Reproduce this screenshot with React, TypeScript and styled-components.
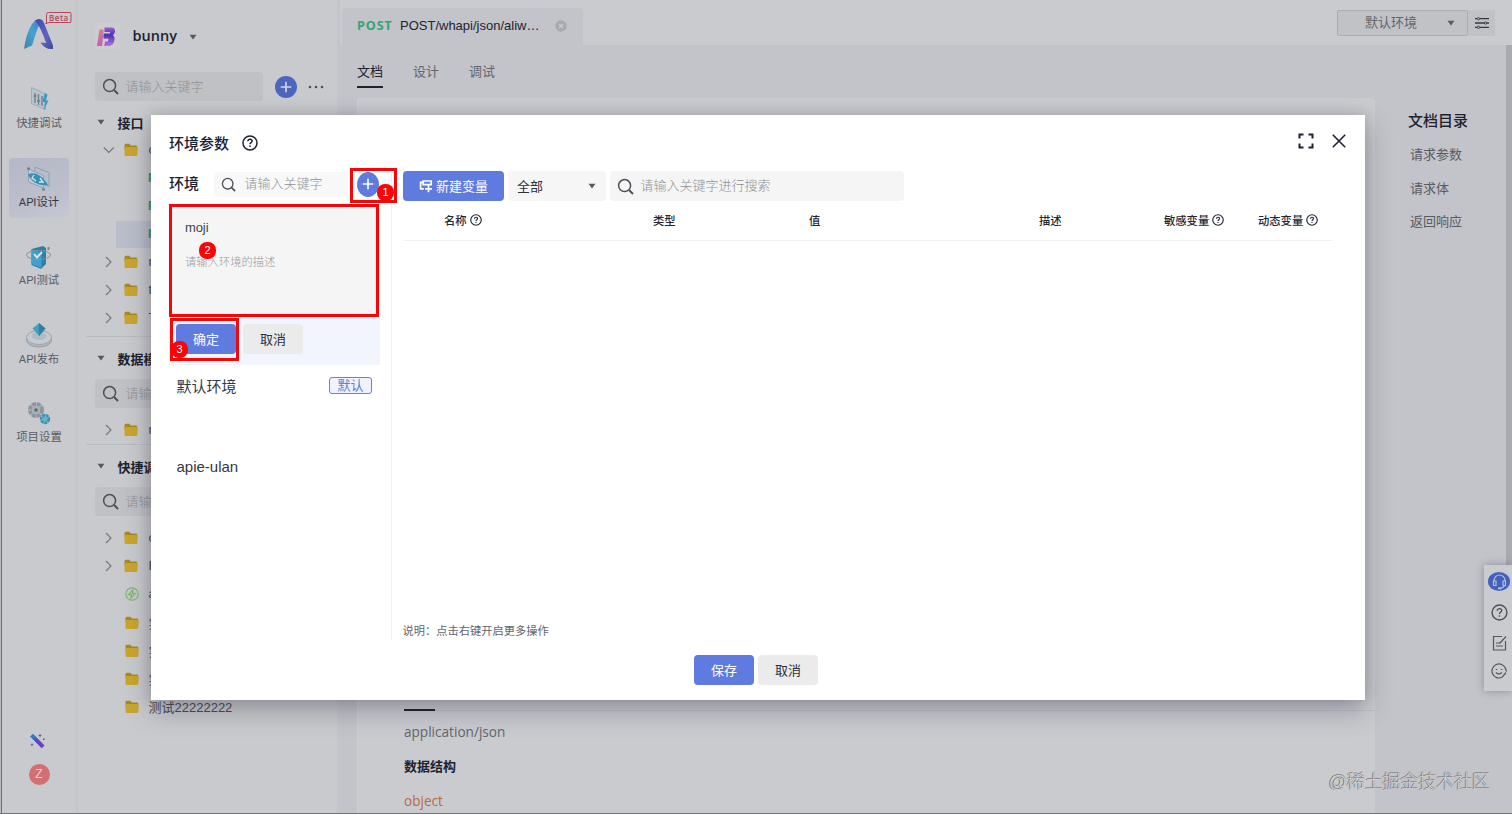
import React from "react";
import styled, { createGlobalStyle, css } from "styled-components";

const GlobalStyle = createGlobalStyle`
  * { box-sizing: border-box; }
  html, body { margin: 0; padding: 0; overflow: hidden; }
  body {
    font-family: "Liberation Sans", "Noto Sans CJK SC", sans-serif;
    font-size: 13px;
    color: #1d2233;
  }
`;

const ui = `"Open Sans", "Noto Sans CJK SC", sans-serif`;

const Screen = styled.div`
  position: relative;
  width: 1512px;
  height: 814px;
  display: flex;
  overflow: hidden;
  background: #c9cacd;
  border-bottom: 1px solid #73747a;
`;

const WindowEdge = styled.div`
  flex: none;
  width: 2px;
  background: #b9b9be;
  border-right: 1px solid #707178;
`;

/* ---------- left navigation ---------- */

const Nav = styled.nav`
  flex: none;
  width: 76px;
  display: flex;
  flex-direction: column;
  align-items: center;
  padding-top: 11px;
  border-right: 2px solid #c4c5ca;
`;

const Logo = styled.div`
  height: 68px;
  width: 76px;
  padding-left: 1px;
`;

const NavList = styled.div`
  display: flex;
  flex-direction: column;
  gap: 18.5px;
`;

const NavItem = styled.div<{ $active?: boolean }>`
  width: 60px;
  height: 60px;
  padding-top: 5px;
  display: flex;
  flex-direction: column;
  align-items: center;
  border-radius: 4px;
  ${(p) => p.$active && css`background: linear-gradient(160deg, #b4b7c4, #bec0ce 70%, #c6c8d2);`}
`;

const NavLabel = styled.span<{ $active?: boolean }>`
  font-family: Roboto, "Noto Sans CJK SC", sans-serif;
  font-size: 11.4px;
  line-height: 16px;
  white-space: nowrap;
  color: ${(p) => (p.$active ? "#343845" : "#5a5d66")};
`;

const NavFoot = styled.div`
  margin-top: auto;
  margin-bottom: 28px;
  display: flex;
  flex-direction: column;
  align-items: center;
  gap: 15px;
`;

const WandSlot = styled.div`
  display: flex;
  margin-right: 4px;
`;

const Avatar = styled.div`
  width: 21px;
  height: 21px;
  border-radius: 50%;
  background: #d36f73;
  color: #e5d5d7;
  font-size: 12px;
  line-height: 21px;
  text-align: center;
`;

/* ---------- project sidebar ---------- */

const Sidebar = styled.aside`
  flex: none;
  width: 262px;
  padding-left: 17px;
  border-right: 3px solid #c4c5ca;
`;

const Project = styled.div`
  height: 72px;
  display: flex;
  align-items: center;
  gap: 12.5px;
  font: 600 14.5px ${ui};
  color: #20232f;
`;

const ProjectName = styled.span`
  display: flex;
  align-items: center;
  gap: 12px;
  padding-bottom: 2px;

  svg { position: relative; top: 2px; }
`;

const SearchRow = styled.div`
  display: flex;
  align-items: center;
  height: 29px;
`;

const SearchBox = styled.div<{ $w: number; $h: number; $bg: string; $gap?: number }>`
  width: ${(p) => p.$w}px;
  height: ${(p) => p.$h}px;
  flex: none;
  display: flex;
  align-items: center;
  gap: ${(p) => p.$gap ?? 6.5}px;
  padding-left: 7px;
  background: ${(p) => p.$bg};
  border-radius: 4px;
  color: #8e9096;
  font-weight: 300;
  font-size: 13px;
  white-space: nowrap;
`;

const Placeholder = styled.span`
  padding-bottom: 3px;
`;

const AddCircle = styled.div<{ $w: number; $h: number; $bg: string }>`
  width: ${(p) => p.$w}px;
  height: ${(p) => p.$h}px;
  flex: none;
  border-radius: 50%;
  background: ${(p) => p.$bg};
  display: flex;
  align-items: center;
  justify-content: center;
`;

const SideAdd = styled.div`
  display: flex;
  align-items: center;
  gap: 11px;
  margin-left: 12px;
`;

const Group = styled.section<{ $line?: boolean; $end?: number }>`
  border-top: ${(p) => (p.$line ? "1px solid #bbbcc1" : "0")};
  margin-left: -9px;
  padding: 0 0 ${(p) => p.$end ?? 0}px 9px;
`;

const GroupTitle = styled.div<{ $h: number; $top?: number }>`
  height: ${(p) => p.$h}px;
  display: flex;
  align-items: center;
  gap: 12.5px;
  padding: ${(p) => p.$top ?? 0}px 0 0 2px;
  font-size: 13px;
  font-weight: 700;
  color: #20232f;
  white-space: nowrap;
`;

const GroupGap = styled.div`
  height: 8px;
`;

const TreeRow = styled.div<{ $leaf?: boolean }>`
  height: 28.05px;
  display: flex;
  align-items: center;
  padding-left: ${(p) => (p.$leaf ? 9 : 8)}px;
  color: #494c56;
  font-size: 13px;
`;

const Caret = styled.span`
  width: 21px;
  display: flex;
`;

const Kind = styled.span<{ $leaf?: boolean }>`
  width: ${(p) => (p.$leaf ? 23.5 : 24.5)}px;
  display: flex;
`;

const RowName = styled.span`
  padding-bottom: 1px;
`;

const Method = styled.span`
  color: #2c9a63;
  font-size: 12px;
  font-weight: 700;
`;

const RowFill = styled.span<{ $active?: boolean }>`
  display: flex;
  align-items: center;
  flex: 1;
  height: 27px;
  margin-left: 13px;
  padding-left: 32px;
  ${(p) => p.$active && css`background: #babdca;`}
`;

/* ---------- document area ---------- */

const Main = styled.main`
  flex: 1;
  min-width: 0;
  display: flex;
  flex-direction: column;
  background: #c3c4c9;
`;

const TopBar = styled.div`
  height: 45px;
  flex: none;
  display: flex;
  justify-content: space-between;
  align-items: flex-end;
  background: #cacbcf;
  padding: 0 17px 0 2px;
`;

const FileTab = styled.div`
  width: 241px;
  height: 37px;
  display: flex;
  align-items: center;
  padding: 0 0 2px 15px;
  background: #c3c4c9;
  border-radius: 4px 4px 0 0;
  font-size: 13px;
  color: #20232f;
`;

const PostTag = styled.b`
  font-family: ${ui};
  font-size: 12.6px;
  color: #35a372;
  letter-spacing: 0.9px;
  width: 43px;
`;

const TabTitle = styled.span`
  width: 155px;
`;

const EnvPicker = styled.div`
  display: flex;
  height: 26px;
  margin-bottom: 9px;
`;

const EnvSelect = styled.div`
  width: 131px;
  display: flex;
  align-items: center;
  justify-content: space-between;
  padding: 0 12px 0 27px;
  border: 1px solid #abacb1;
  background: #c1c2c6;
  color: #65676e;
  border-radius: 2px;
`;

const EnvButton = styled.div`
  width: 27px;
  display: flex;
  align-items: center;
  justify-content: center;
  background: #c1c2c6;
`;

const Body = styled.div`
  flex: 1;
  min-height: 0;
  display: flex;
`;

const DocColumn = styled.div`
  width: 1018px;
  margin-left: 17px;
  display: flex;
  flex-direction: column;
`;

const DocTabs = styled.div`
  height: 53px;
  flex: none;
  display: flex;
  gap: 30px;
  padding-top: 15px;
`;

const DocTab = styled.span<{ $active?: boolean }>`
  height: 28px;
  line-height: 24px;
  color: ${(p) => (p.$active ? "#20232f" : "#64666e")};
  border-bottom: 2px solid ${(p) => (p.$active ? "#20232f" : "transparent")};
`;

const DocCard = styled.div`
  flex: 1;
  display: flex;
  flex-direction: column;
  justify-content: flex-end;
  padding: 0 0 0 46px;
  background: #cacbcf;
  border-left: 1px solid #cfd0d4;
  border-radius: 4px 4px 0 0;
`;

const BodyTypeTab = styled.div`
  border-bottom: 1px solid #bcbdc6;
  height: 8px;
  margin-bottom: 9px;
  display: flex;
  align-items: flex-end;
`;

const TabMark = styled.i`
  width: 31px;
  height: 2px;
  margin-bottom: -1px;
  background: #20232f;
`;

const DocLine = styled.div<{ $c: string; $b?: boolean; $h: number }>`
  height: ${(p) => p.$h}px;
  line-height: ${(p) => p.$h}px;
  font-family: ${ui};
  font-size: ${(p) => (p.$b ? 13 : 13.6)}px;
  font-weight: ${(p) => (p.$b ? 700 : 400)};
  color: ${(p) => p.$c};
`;

const Outline = styled.div`
  flex: 1;
  padding: 61px 0 0 33px;
`;

const OutlineTitle = styled.div`
  font-size: 15px;
  font-weight: 500;
  line-height: 30px;
  color: #20232f;
  margin-bottom: 2px;
`;

const OutlineLink = styled.div`
  padding-left: 2px;
  line-height: 33.6px;
  color: #595b64;
`;

const ScrollTrack = styled.div`
  width: 6px;
  height: 520px;
  background: #a9aab0;
`;

/* ---------- floating elements ---------- */

const HelpDock = styled.div`
  position: absolute;
  right: 0;
  top: 565px;
  width: 28px;
  height: 126px;
  display: flex;
  flex-direction: column;
  align-items: center;
  padding: 7px 0 0 2px;
  background: #cacbcf;
  box-shadow: 0 0 8px rgba(40, 42, 60, 0.35);

  svg { flex: none; }
`;

const DockChat = styled.div`
  width: 22px;
  height: 19px;
  flex: none;
  border-radius: 50%;
  background: #4460bd;
  display: flex;
  align-items: center;
  justify-content: center;
`;

const DockItem = styled.div<{ $top: number }>`
  display: flex;
  margin-top: ${(p) => p.$top}px;
`;

const Watermark = styled.div`
  position: absolute;
  right: 22px;
  bottom: 18px;
  font-size: 18px;
  line-height: 26px;
  font-weight: 300;
  color: #d0d1d4;
  text-shadow: -1px 0 0 #77787d, 0 -1px 0 #88898e;
  letter-spacing: -0.1px;
  white-space: nowrap;
`;

/* ---------- environment dialog ---------- */

const Dialog = styled.div`
  position: absolute;
  left: 151px;
  top: 115px;
  width: 1214px;
  height: 585px;
  display: flex;
  flex-direction: column;
  background: #fff;
  box-shadow: 0 10px 26px rgba(30, 30, 50, 0.3), 0 0 12px rgba(30, 30, 50, 0.16);
`;

const DialogHead = styled.div`
  height: 53px;
  flex: none;
  display: flex;
  align-items: center;
  padding: 3px 18px 0 18px;
  font-size: 15px;
  font-weight: 500;
`;

const HeadActions = styled.div`
  margin-left: auto;
  display: flex;
  align-items: center;
  gap: 17px;
  padding-bottom: 5px;
`;

const DialogTitle = styled.span`
  margin-right: 12.5px;
  padding-bottom: 2px;
`;

const DialogBody = styled.div`
  height: 472px;
  flex: none;
  display: flex;
`;

const EnvPane = styled.div`
  width: 241px;
  padding-left: 18px;
  border-right: 1px solid #eeeff1;
`;

const EnvHead = styled.div`
  position: relative;
  height: 36px;
  display: flex;
  align-items: center;
  padding-bottom: 4px;
  font-size: 15px;
  font-weight: 500;
`;

const EnvLabel = styled.span`
  width: 45px;
  padding-bottom: 3px;
`;

const AddSlot = styled.div`
  position: relative;
  margin-left: 9px;
`;

const EditPanel = styled.div`
  width: 211px;
  height: 161px;
  background: #f2f5fe;
`;

const EditFields = styled.div`
  position: relative;
  height: 113px;
  width: 210px;
  padding: 13px 0 0 13px;
  background: #f5f5f5;
  border: 3px solid #fb0407;
`;

const EnvName = styled.div`
  font-family: "Liberation Sans", sans-serif;
  font-size: 13px;
  letter-spacing: -0.1px;
  line-height: 16px;
  color: #41454f;
`;

const EnvDesc = styled.div`
  margin-top: 16px;
  font-size: 11.3px;
  font-weight: 300;
  line-height: 20px;
  color: #999b9f;
`;

const EditActions = styled.div`
  position: relative;
  display: flex;
  gap: 7px;
  padding: 7px 0 0 7px;
`;

const Button = styled.button<{ $primary?: boolean; $w?: number }>`
  width: ${(p) => p.$w ?? 60}px;
  height: 30px;
  display: flex;
  align-items: center;
  justify-content: center;
  gap: 3px;
  padding: 0;
  border: 0;
  border-radius: 4px;
  font: 400 13px "Liberation Sans", "Noto Sans CJK SC", sans-serif;
  color: ${(p) => (p.$primary ? "#fff" : "#2c303c")};
  background: ${(p) => (p.$primary ? "#5f7be0" : "#ebebec")};
`;

const ButtonText = styled.span`
  padding-bottom: 2px;
`;

const Highlight = styled.div<{ $x: number; $y: number; $w: number; $h: number }>`
  position: absolute;
  left: ${(p) => p.$x}px;
  top: ${(p) => p.$y}px;
  width: ${(p) => p.$w}px;
  height: ${(p) => p.$h}px;
  border: 3px solid #fb0407;
`;

const Step = styled.span<{ $x: number; $y: number }>`
  position: absolute;
  left: ${(p) => p.$x}px;
  top: ${(p) => p.$y}px;
  width: 17px;
  height: 17px;
  border-radius: 8px;
  background: #fb0407;
  color: #fff;
  font: 11px/17px "Liberation Sans", sans-serif;
  text-align: center;
`;

const EnvItem = styled.div<{ $h: number; $top: number }>`
  height: ${(p) => p.$h}px;
  display: flex;
  align-items: flex-start;
  justify-content: space-between;
  padding: ${(p) => p.$top}px 19px 0 7.5px;
  font-size: 15px;
  line-height: 22px;
  color: #343844;
`;

const DefaultBadge = styled.span`
  width: 43px;
  height: 17px;
  margin-top: 1px;
  border: 1px solid #6a80dc;
  border-radius: 3px;
  background: #f0f3fe;
  color: #5f7be0;
  font-size: 13px;
  line-height: 15px;
  text-align: center;
`;

const VarPane = styled.div`
  flex: 1;
  display: flex;
  flex-direction: column;
  padding: 3px 32px 0 11px;
`;

const VarTools = styled.div`
  display: flex;
  gap: 4px;
`;

const Filter = styled.div`
  width: 98px;
  height: 30px;
  display: flex;
  align-items: center;
  justify-content: space-between;
  padding: 0 10px 0 9px;
  border-radius: 4px;
  background: #f6f6f7;
  color: #2c303c;
`;

const TableHead = styled.div`
  display: grid;
  grid-template-columns: 41px 209px 156px 230px 125px 94px auto;
  align-items: center;
  height: 40px;
  padding-bottom: 2px;
  border-bottom: 1px solid #f1f1f2;
  font-size: 11.3px;
  font-weight: 500;
  color: #232733;
`;

const HeadCell = styled.span`
  display: flex;
  align-items: center;
  gap: 3px;
  white-space: nowrap;
`;

const Hint = styled.div`
  margin-top: auto;
  margin-bottom: -1px;
  margin-left: -0.5px;
  font-size: 11.25px;
  line-height: 20px;
  color: #62656d;
`;

const DialogFoot = styled.div`
  display: flex;
  justify-content: center;
  gap: 4px;
  padding-top: 15px;
  padding-right: 4px;
`;

/* ---------- icons ---------- */

const SearchIcon = ({ s = 17, c = "#4d5057" }: { s?: number; c?: string }) => (
  <svg width={s} height={s} viewBox="0 0 17 17" fill="none" stroke={c} strokeWidth="1.5">
    <circle cx="7.6" cy="7.6" r="6" />
    <path d="M12 12l4 4" strokeWidth="1.9" />
  </svg>
);

const PlusIcon = ({ c = "#fff" }: { c?: string }) => (
  <svg width="12" height="12" viewBox="0 0 12 12" stroke={c} strokeWidth="1.6">
    <path d="M6 .7v10.6M.7 6h10.6" />
  </svg>
);

const TriIcon = ({ c = "#565960" }: { c?: string }) => (
  <svg width="8" height="6" viewBox="0 0 8 6" fill={c}>
    <path d="M.5.8h7L4 5.400z" />
  </svg>
);

const ChevronIcon = ({ open }: { open?: boolean }) => (
  <svg width="12" height="12" viewBox="0 0 12 12" fill="none" stroke="#74767c" strokeWidth="1.1">
    <path d={open ? "M.8 3.5l5 5 5-5" : "M3 1l5 5-5 5"} />
  </svg>
);

const FolderIcon = () => (
  <svg width="14" height="14" viewBox="0 0 14 14">
    <path d="M.5 2.2Q.5.8 1.8.8h3.6l1.5 1.700h5q1.300 0 1.300 1.200v3H.5z" fill="#a88a24" />
    <path d="M.5 5q0-1 1-1h11.200q1 0 1 1l-.4 6.800q-.1 1.200-1.300 1.200H1.800Q.6 13 .6 11.800z" fill="#caa52f" />
  </svg>
);

const BoltIcon = () => (
  <svg width="14" height="14" viewBox="0 0 14 14" fill="none" stroke="#80b574" strokeWidth="1.2">
    <circle cx="7" cy="7" r="6.2" />
    <path d="M7.8 2.8L3.600 7.600h2.800l-.5 3.600 4.300-4.900H7.400z" />
  </svg>
);

const QuestionIcon = ({ s = 15, c = "#1d2233", w = 1.5 }: { s?: number; c?: string; w?: number }) => (
  <svg width={s} height={s} viewBox="0 0 16 16" fill="none" stroke={c} strokeWidth={w}>
    <circle cx="8" cy="8" r="7" />
    <path d="M5.900 6.300c.1-1.400 1-2 2.100-2s2.100.7 2.100 1.800c0 1.500-2.100 1.500-2.100 3.200M8 10.500v1.500" />
  </svg>
);

const LogoIcon = () => (
  <svg width="75" height="44" viewBox="0 0 75 44">
    <defs>
      <linearGradient id="lgA" x1="0" y1="1" x2="1" y2="0">
        <stop offset="0" stopColor="#3f7fb0" />
        <stop offset=".5" stopColor="#45a3cf" />
        <stop offset="1" stopColor="#4e74c4" />
      </linearGradient>
      <linearGradient id="lgB" x1="0" y1="0" x2="1" y2="1">
        <stop offset="0" stopColor="#3b4cae" />
        <stop offset=".6" stopColor="#6262bd" />
        <stop offset="1" stopColor="#3c4b9c" />
      </linearGradient>
    </defs>
    <path d="M22 38C24 25 28 12 35 8.500l6 1C35 14 33 27 30 34.500L22 38z" fill="url(#lgA)" />
    <path d="M33 9.500Q39 5.500 42 12L51 34.500V38Q43 39 38.500 31.500l5.500.5Q39 16 33 9.500z" fill="url(#lgB)" />
    <path d="M44.500 12.500V3.500Q44.500 1.500 46.500 1.500H68Q69 1.500 69 2.500V10.500Q69 11.500 68 11.500H47L43.500 12.500z" fill="none" stroke="#ba465b" />
    <text x="47" y="9.700" fontSize="8" fontFamily="Open Sans, sans-serif" fontWeight="600" letterSpacing=".5" fill="#ba465b">Beta</text>
  </svg>
);

const ProjectIcon = () => (
  <svg width="25" height="26" viewBox="0 0 25 26">
    <defs>
      <linearGradient id="pb" x1="0" y1="0" x2="0" y2="1">
        <stop offset="0" stopColor="#a05ccb" />
        <stop offset=".4" stopColor="#4836b2" />
        <stop offset="1" stopColor="#b774d4" />
      </linearGradient>
      <linearGradient id="pa" x1="0" y1="0" x2="0" y2="1">
        <stop offset="0" stopColor="#cf8085" />
        <stop offset="1" stopColor="#c65cc4" />
      </linearGradient>
    </defs>
    <rect width="25" height="26" rx="2" fill="#cdcdd1" />
    <path d="M4.500 6.500h4v5h5v4H8l-1 7.500H2z" fill="url(#pa)" />
    <path d="M9.500 4.500h7q4 0 3.500 4.500L18 12.500q2 1 1.500 4.500-1 6-6 6H9l1.200-4.500H13l.5-3H9v-5h6V9H9.500z" fill="url(#pb)" />
  </svg>
);

const DebugIcon = () => (
  <svg width="32" height="31" viewBox="0 0 32 31" fill="none">
    <path d="M8.500 3.500l14 6.500v15.500l-14-6z" fill="#bbc4cc" stroke="#9eaab4" />
    <path d="M12 9v10M15.500 10v11M19 12v10M10.500 12h3M14 17h3" stroke="#71818d" strokeWidth="1.400" />
    <path d="M22 9l-3 9h3l-1.500 9 5-10.500H23l1.500-6z" fill="#3c9cc4" />
  </svg>
);

const DesignIcon = () => (
  <svg width="32" height="31" viewBox="0 0 32 31" fill="none">
    <path d="M12 4l14 5.500v14L12 18z" fill="#b3bec9" stroke="#93a0ad" />
    <path d="M5.500 6l15 6.500v12.500l-15-6z" fill="#bfcad4" stroke="#93a0ad" />
    <path d="M5 11.500c6-3.500 14 0 20 10.500-8 1-16-1.500-20-10.500z" fill="#3990b8" />
    <path d="M11 12l-2 3 4 3M17 15l3 4-4 0" stroke="#d5e4eb" strokeWidth="1.300" />
    <path d="M4 5.500h3M19 26.500h3" stroke="#6f7c88" strokeWidth="2" />
  </svg>
);

const TestIcon = () => (
  <svg width="32" height="31" viewBox="0 0 32 31" fill="none">
    <path d="M8.500 8l11.500-3 3 2v16l-5 5-9.500-4z" fill="#2d81a8" />
    <path d="M8.500 8l10 4v15l-10-4z" fill="#3fa0cb" />
    <ellipse cx="15.500" cy="14" rx="12" ry="4.500" stroke="#8493a0" />
    <path d="M11 13l3 3.500 5-5.500" stroke="#d5e6ee" strokeWidth="1.900" />
    <path d="M25.500 6v3" stroke="#7b8792" strokeWidth="2" />
  </svg>
);

const PublishIcon = () => (
  <svg width="32" height="31" viewBox="0 0 32 31" fill="none">
    <ellipse cx="16" cy="20" rx="12.500" ry="7" fill="#b3bac2" stroke="#929aa4" />
    <ellipse cx="16" cy="17.500" rx="12.500" ry="7" fill="#c6cbd1" stroke="#9ba3ac" />
    <ellipse cx="16" cy="16" rx="7.500" ry="4" fill="#b2bbc4" />
    <path d="M9.500 8.500L16 3l6.500 5.500L16 16z" fill="#449fc2" />
    <path d="M16 3l6.500 5.500L16 16z" fill="#327f9e" />
  </svg>
);

const SettingsIcon = () => (
  <svg width="32" height="31" viewBox="0 0 32 31" fill="none">
    <circle cx="13" cy="12" r="6" stroke="#8d959f" strokeWidth="4" strokeDasharray="4 .7" />
    <circle cx="13" cy="12" r="4" fill="#a8b0b9" />
    <circle cx="13" cy="12" r="1.800" fill="#5e6873" />
    <circle cx="22" cy="21" r="3.700" stroke="#3a93bb" strokeWidth="3" strokeDasharray="3 .5" />
    <circle cx="22" cy="21" r="2.400" fill="#6cb0cc" />
  </svg>
);

const WandIcon = () => (
  <svg width="17" height="16" viewBox="0 0 17 16">
    <defs>
      <linearGradient id="wand" x1="0" y1="0" x2="1" y2="1">
        <stop offset="0" stopColor="#3a86c4" />
        <stop offset=".5" stopColor="#4a50c0" />
        <stop offset="1" stopColor="#8a2fb5" />
      </linearGradient>
    </defs>
    <path d="M1.500 3.500L4 1.200 15 12.500l-2.300 2.300z" fill="url(#wand)" stroke="url(#wand)" strokeLinejoin="round" />
    <path d="M11 .5l.6 1.400 1.400.6-1.400.6L11 4.500l-.6-1.400L9 2.500l1.400-.6zM3 10l.5 1.200 1.200.5-1.200.5L3 13.500l-.5-1.300-1.200-.5 1.200-.5z" fill="#5350be" />
    <path d="M14 5.500h1.500v1.500H14z" fill="#5350be" />
  </svg>
);

const DotsIcon = () => (
  <svg width="17" height="4" viewBox="0 0 17 4" fill="#4d5057">
    <circle cx="2" cy="2" r="1.300" />
    <circle cx="8" cy="2" r="1.300" />
    <circle cx="14" cy="2" r="1.300" />
  </svg>
);

const TabCloseIcon = () => (
  <svg width="12" height="12" viewBox="0 0 12 12">
    <circle cx="6" cy="6" r="5.700" fill="#a9aaaf" />
    <path d="M4 4l4 4M8 4l-4 4" stroke="#cbccd0" strokeWidth="1.100" />
  </svg>
);

const SlidersIcon = () => (
  <svg width="14" height="12" viewBox="0 0 14 12" fill="none" stroke="#363945" strokeWidth="1.300">
    <path d="M0 1.700h2M5 1.700h9M0 6h9M12 6h2M0 10.300h2M5 10.300h9" />
    <circle cx="3.500" cy="1.700" r="1.200" strokeWidth="1" />
    <circle cx="10.500" cy="6" r="1.200" strokeWidth="1" />
    <circle cx="3.500" cy="10.300" r="1.200" strokeWidth="1" />
  </svg>
);

const ExpandIcon = () => (
  <svg width="16" height="16" viewBox="0 0 16 16" fill="none" stroke="#1d2233" strokeWidth="2">
    <path d="M1.500 5.500v-4h4M10.500 1.500h4v4M14.500 10.500v4h-4M5.500 14.500h-4v-4" />
  </svg>
);

const CloseIcon = () => (
  <svg width="16" height="16" viewBox="0 0 16 16" stroke="#1d2233" strokeWidth="1.600">
    <path d="M1.800 1.800l12.400 12.400M14.200 1.800L1.800 14.200" />
  </svg>
);

const NewVarIcon = () => (
  <svg width="14" height="14" viewBox="0 0 14 14" fill="none" stroke="#fff" strokeWidth="1.700">
    <path d="M4.200 2h8v3.600h-8zM4.200 3.400H1.600v6.400h3.200M6 9.800h7M9.500 6.500v6.700" />
  </svg>
);

const HeadsetIcon = () => (
  <svg width="15" height="16" viewBox="0 0 15 16" fill="none" stroke="#b9c0dc" strokeWidth="1.200">
    <path d="M2 7.500V6.500a5.500 5.500 0 0111 0V7.500M1.500 7h2.500v4.500H1.500zM11 7h2.500v4.500H11zM12.500 11.500q-1 2.500-4 2.800" />
    <path d="M6 14.300h3" strokeWidth="2" />
  </svg>
);

const NoteIcon = () => (
  <svg width="15" height="16" viewBox="0 0 15 16" fill="none" stroke="#53565e" strokeWidth="1.200">
    <path d="M10 1.500H1.500v13.500h12V6M4 11h7M4 8h3.500M7.500 8.500L14 1.500" />
  </svg>
);

const SmileIcon = () => (
  <svg width="16" height="16" viewBox="0 0 16 16" fill="none" stroke="#53565e" strokeWidth="1.200">
    <path d="M14.500 5.500A7 7 0 1011 14.300L15 9.500M14.500 5.500l1 3" />
    <path d="M4.800 6.500h1.500M9.800 6.500h1.500M4.800 9.500q3 2.800 6 0" />
  </svg>
);

/* ---------- data ---------- */

const navItems = [
  { label: "快捷调试", icon: <DebugIcon /> },
  { label: "API设计", icon: <DesignIcon />, active: true },
  { label: "API测试", icon: <TestIcon /> },
  { label: "API发布", icon: <PublishIcon /> },
  { label: "项目设置", icon: <SettingsIcon /> },
];

type RowData = { name: string; caret?: "open" | "closed"; bolt?: boolean };

const Row = ({ name, caret, bolt }: RowData) => (
  <TreeRow $leaf={!caret}>
    <Caret>{caret && <ChevronIcon open={caret === "open"} />}</Caret>
    <Kind $leaf={!caret}>{bolt ? <BoltIcon /> : <FolderIcon />}</Kind>
    <RowName>{name}</RowName>
  </TreeRow>
);

const quickRows: RowData[] = [
  { name: "c", caret: "closed" },
  { name: "F", caret: "closed" },
  { name: "a", bolt: true },
  { name: "实" },
  { name: "实" },
  { name: "实" },
  { name: "测试22222222" },
];

const SideSearch = () => (
  <SearchBox $w={168} $h={29} $bg="#c0c1c5">
    <SearchIcon />
    <Placeholder>请输入关键字</Placeholder>
  </SearchBox>
);

export default function App() {
  return (
    <>
      <GlobalStyle />
      <Screen>
        <WindowEdge />
        <Nav>
          <Logo><LogoIcon /></Logo>
          <NavList>
            {navItems.map((n) => (
              <NavItem key={n.label} $active={n.active}>
                {n.icon}
                <NavLabel $active={n.active}>{n.label}</NavLabel>
              </NavItem>
            ))}
          </NavList>
          <NavFoot>
            <WandSlot><WandIcon /></WandSlot>
            <Avatar>Z</Avatar>
          </NavFoot>
        </Nav>

        <Sidebar>
          <Project>
            <ProjectIcon />
            <ProjectName>bunny <TriIcon /></ProjectName>
          </Project>
          <SearchRow>
            <SideSearch />
            <SideAdd>
              <AddCircle $w={22} $h={22} $bg="#4d66bd"><PlusIcon c="#d4d8e6" /></AddCircle>
              <DotsIcon />
            </SideAdd>
          </SearchRow>
          <Group $end={4}>
            <GroupTitle $h={35} $top={7}><TriIcon />接口</GroupTitle>
            <Row name="c" caret="open" />
            <TreeRow><RowFill><Method>P</Method></RowFill></TreeRow>
            <TreeRow><RowFill><Method>P</Method></RowFill></TreeRow>
            <TreeRow><RowFill $active><Method>P</Method></RowFill></TreeRow>
            <Row name="m" caret="closed" />
            <Row name="t" caret="closed" />
            <Row name="T" caret="closed" />
          </Group>
          <Group $line>
            <GroupTitle $h={42}><TriIcon />数据模型</GroupTitle>
            <SideSearch />
            <GroupGap />
            <Row name="m" caret="closed" />
          </Group>
          <Group $line>
            <GroupTitle $h={42}><TriIcon />快捷调试</GroupTitle>
            <SideSearch />
            <GroupGap />
            {quickRows.map((r, i) => <Row key={i} {...r} />)}
          </Group>
        </Sidebar>

        <Main>
          <TopBar>
            <FileTab>
              <PostTag>POST</PostTag>
              <TabTitle>POST/whapi/json/aliw…</TabTitle>
              <TabCloseIcon />
            </FileTab>
            <EnvPicker>
              <EnvSelect><Placeholder>默认环境</Placeholder><TriIcon /></EnvSelect>
              <EnvButton><SlidersIcon /></EnvButton>
            </EnvPicker>
          </TopBar>
          <Body>
            <DocColumn>
              <DocTabs>
                <DocTab $active>文档</DocTab>
                <DocTab>设计</DocTab>
                <DocTab>调试</DocTab>
              </DocTabs>
              <DocCard>
                <BodyTypeTab><TabMark /></BodyTypeTab>
                <DocLine $c="#64666d" $h={24}>application/json</DocLine>
                <DocLine $c="#20232f" $b $h={45}>数据结构</DocLine>
                <DocLine $c="#b86d3d" $h={24}>object</DocLine>
              </DocCard>
            </DocColumn>
            <Outline>
              <OutlineTitle>文档目录</OutlineTitle>
              <OutlineLink>请求参数</OutlineLink>
              <OutlineLink>请求体</OutlineLink>
              <OutlineLink>返回响应</OutlineLink>
            </Outline>
            <ScrollTrack />
          </Body>
        </Main>

        <HelpDock>
          <DockChat><HeadsetIcon /></DockChat>
          <DockItem $top={13}><QuestionIcon s={17} c="#4d5057" w={1.3} /></DockItem>
          <DockItem $top={14}><NoteIcon /></DockItem>
          <DockItem $top={12}><SmileIcon /></DockItem>
        </HelpDock>

        <Dialog>
          <DialogHead>
            <DialogTitle>环境参数</DialogTitle>
            <QuestionIcon s={16} />
            <HeadActions><ExpandIcon /><CloseIcon /></HeadActions>
          </DialogHead>
          <DialogBody>
            <EnvPane>
              <EnvHead>
                <EnvLabel>环境</EnvLabel>
                <SearchBox $w={134} $h={25} $bg="#f8f8f8" $gap={8.5}>
                  <SearchIcon s={15} />
                  <Placeholder>请输入关键字</Placeholder>
                </SearchBox>
                <AddSlot>
                  <AddCircle $w={22} $h={25} $bg="#5f7be0"><PlusIcon /></AddCircle>
                  <Highlight $x={-7} $y={-4} $w={47} $h={35} />
                  <Step $x={20} $y={12}>1</Step>
                </AddSlot>
              </EnvHead>
              <EditPanel>
                <EditFields>
                  <EnvName>moji</EnvName>
                  <EnvDesc>请输入环境的描述</EnvDesc>
                  <Step $x={27} $y={35}>2</Step>
                </EditFields>
                <EditActions>
                  <Button $primary><ButtonText>确定</ButtonText></Button>
                  <Button><ButtonText>取消</ButtonText></Button>
                  <Highlight $x={1} $y={1} $w={69} $h={43} />
                  <Step $x={2} $y={24}>3</Step>
                </EditActions>
              </EditPanel>
              <EnvItem $h={81} $top={11}>默认环境<DefaultBadge>默认</DefaultBadge></EnvItem>
              <EnvItem $h={81} $top={10}>apie-ulan</EnvItem>
            </EnvPane>
            <VarPane>
              <VarTools>
                <Button $primary $w={101}><NewVarIcon /><ButtonText>新建变量</ButtonText></Button>
                <Filter><ButtonText>全部</ButtonText><TriIcon /></Filter>
                <SearchBox $w={294} $h={30} $bg="#f5f5f5">
                  <SearchIcon />
                  <Placeholder>请输入关键字进行搜索</Placeholder>
                </SearchBox>
              </VarTools>
              <TableHead>
                <span />
                <HeadCell>名称<QuestionIcon s={12} /></HeadCell>
                <HeadCell>类型</HeadCell>
                <HeadCell>值</HeadCell>
                <HeadCell>描述</HeadCell>
                <HeadCell>敏感变量<QuestionIcon s={12} /></HeadCell>
                <HeadCell>动态变量<QuestionIcon s={12} /></HeadCell>
              </TableHead>
              <Hint>说明：点击右键开启更多操作</Hint>
            </VarPane>
          </DialogBody>
          <DialogFoot>
            <Button $primary><ButtonText>保存</ButtonText></Button>
            <Button><ButtonText>取消</ButtonText></Button>
          </DialogFoot>
        </Dialog>

        <Watermark>@稀土掘金技术社区</Watermark>
      </Screen>
    </>
  );
}
